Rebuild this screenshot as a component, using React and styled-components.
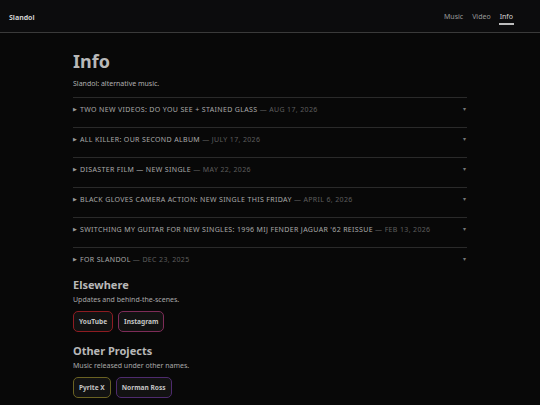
import React from 'react';
import styled, { createGlobalStyle } from 'styled-components';

const Global = createGlobalStyle`
  html, body {
    margin: 0;
    padding: 0;
    background: #080808;
    font-family: "Noto Sans", "Open Sans", sans-serif;
    color: #b5b5b5;
  }
  * { box-sizing: border-box; }
`;

const Header = styled.header`
  height: 33px;
  display: flex;
  align-items: center;
  justify-content: space-between;
  padding: 0 27px 0 9px;
  background: #0c0c0d;
  border-bottom: 1px solid #3a3a3a;
`;

const Brand = styled.div`
  font-size: 7px;
  font-weight: 700;
  color: #d0d0d0;
  padding-top: 2px;
`;

const Nav = styled.nav`
  display: flex;
  gap: 9px;
`;

const NavLink = styled.a`
  position: relative;
  font-size: 7px;
  color: ${p => (p.$active ? '#d4d4d4' : '#9a9a9a')};
  &::after {
    content: '';
    display: ${p => (p.$active ? 'block' : 'none')};
    position: absolute;
    left: -1px;
    right: -1px;
    bottom: -4px;
    height: 1.5px;
    background: #bdbdbd;
  }
`;

const Main = styled.main`
  width: 394px;
  margin: 0 auto;
  padding-top: 16px;
`;

const Title = styled.h1`
  margin: 0;
  font-size: 18px;
  line-height: 24px;
  font-weight: 700;
  color: #b8b8b8;
`;

const Lead = styled.p`
  margin: 6px 0 8px;
  font-size: 7px;
  line-height: 10px;
  color: #b0b0b0;
`;

const List = styled.div`
  display: flex;
  flex-direction: column;
`;

const Row = styled.div`
  height: 30px;
  display: flex;
  align-items: flex-start;
  padding-top: 7px;
  border-top: 1px solid #2a2a2a;
`;

const Marker = styled.span`
  font-size: 5px;
  line-height: 9px;
  color: #9a9a9a;
  width: 7px;
`;

const Headline = styled.span`
  flex: 1;
  font-size: 7px;
  line-height: 9px;
  letter-spacing: 0.35px;
  color: #a8a8a8;
`;

const DateText = styled.span`
  color: #5e5e5e;
`;

const Caret = styled.span`
  font-size: 6px;
  line-height: 9px;
  color: #777;
  margin-right: 1px;
`;

const Section = styled.section`
  margin-top: ${p => p.$top}px;
`;

const SectionTitle = styled.h2`
  margin: 0;
  font-size: 11px;
  line-height: 14px;
  font-weight: 700;
  color: #b8b8b8;
`;

const SectionText = styled.p`
  margin: 3px 0 6px;
  font-size: 7px;
  line-height: 10px;
  color: #a8a8a8;
`;

const Buttons = styled.div`
  display: flex;
  gap: 5px;
`;

const Pill = styled.a`
  height: 21px;
  padding: 0 5px;
  display: flex;
  align-items: center;
  font-size: 6.6px;
  font-weight: 700;
  color: #c4c4c4;
  background: #121212;
  border: 1.5px solid ${p => p.$color};
  border-radius: 5px;
`;

const posts = [
  ['TWO NEW VIDEOS: DO YOU SEE + STAINED GLASS', 'AUG 17, 2026'],
  ['ALL KILLER: OUR SECOND ALBUM', 'JULY 17, 2026'],
  ['DISASTER FILM — NEW SINGLE', 'MAY 22, 2026'],
  ['BLACK GLOVES CAMERA ACTION: NEW SINGLE THIS FRIDAY', 'APRIL 6, 2026'],
  ["SWITCHING MY GUITAR FOR NEW SINGLES: 1996 MIJ FENDER JAGUAR '62 REISSUE", 'FEB 13, 2026'],
  ['FOR SLANDOL', 'DEC 23, 2025'],
];

export default function App() {
  return (
    <>
      <Global />
      <Header>
        <Brand>Slandol</Brand>
        <Nav>
          <NavLink>Music</NavLink>
          <NavLink>Video</NavLink>
          <NavLink $active>Info</NavLink>
        </Nav>
      </Header>
      <Main>
        <Title>Info</Title>
        <Lead>Slandol: alternative music.</Lead>
        <List>
          {posts.map(([t, d]) => (
            <Row key={t}>
              <Marker>▶</Marker>
              <Headline>
                {t} <DateText>— {d}</DateText>
              </Headline>
              <Caret>▾</Caret>
            </Row>
          ))}
        </List>
        <Section $top={1}>
          <SectionTitle>Elsewhere</SectionTitle>
          <SectionText>Updates and behind-the-scenes.</SectionText>
          <Buttons>
            <Pill $color="#8e1c22">YouTube</Pill>
            <Pill $color="#7e2c58">Instagram</Pill>
          </Buttons>
        </Section>
        <Section $top={12}>
          <SectionTitle>Other Projects</SectionTitle>
          <SectionText>Music released under other names.</SectionText>
          <Buttons>
            <Pill $color="#6a6222">Pyrite X</Pill>
            <Pill $color="#4e2b6e">Norman Ross</Pill>
          </Buttons>
        </Section>
      </Main>
    </>
  );
}
